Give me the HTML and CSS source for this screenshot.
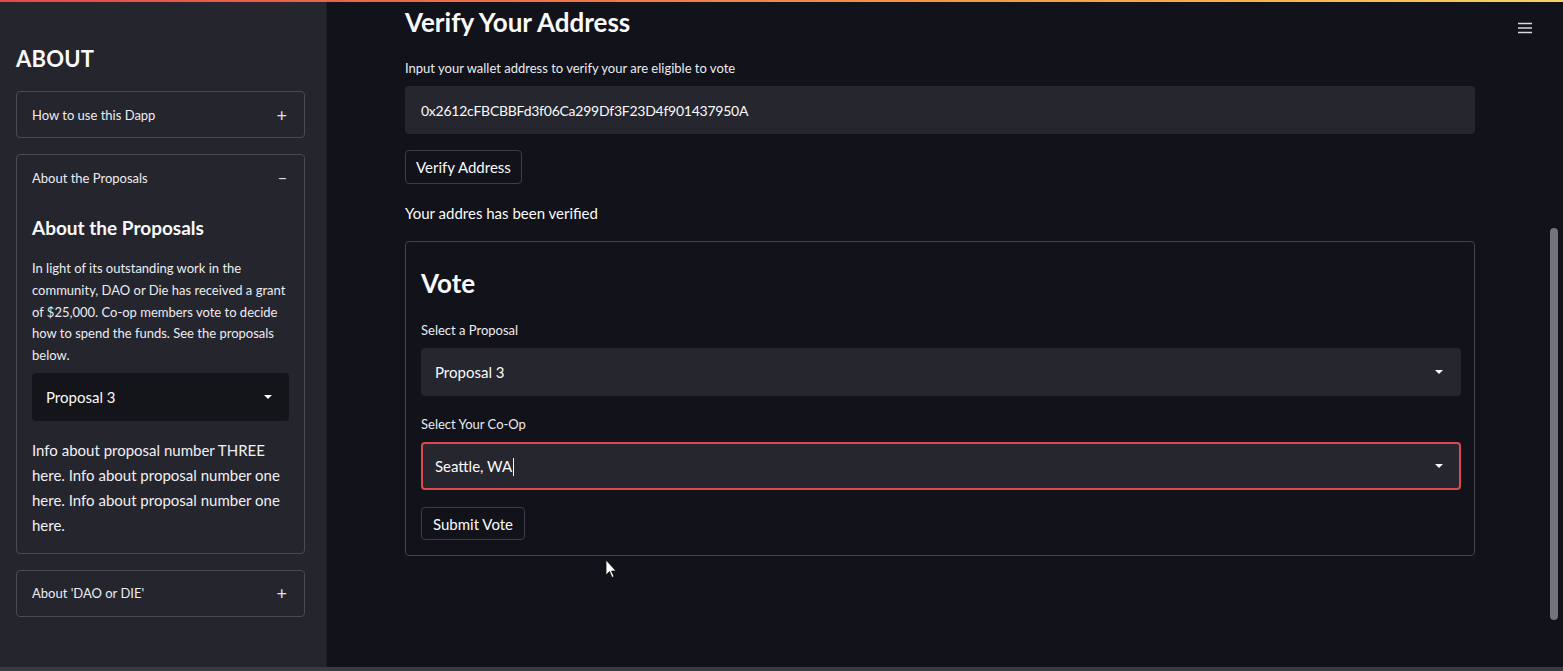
FILE: index.html
```html
<!DOCTYPE html>
<html>
<head>
<meta charset="utf-8">
<link rel="stylesheet" href="styles.css">
</head>
<body>
<div class="topline"></div>
<div class="app">
  <aside class="sidebar">
    <h2 class="side-title">ABOUT</h2>
    <div class="expander">
      <div class="exp-head"><span>How to use this Dapp</span><span class="sign">+</span></div>
    </div>
    <div class="expander">
      <div class="exp-head"><span>About the Proposals</span><span class="sign minus">&minus;</span></div>
      <div class="exp-body">
        <h3 class="exp-title">About the Proposals</h3>
        <p class="small">In light of its outstanding work in the community, DAO or Die has received a grant of $25,000. Co-op members vote to decide how to spend the funds. See the proposals below.</p>
        <div class="side-select"><span>Proposal 3</span><svg class="caret" width="10" height="6" viewBox="0 0 10 6"><path d="M1 1h8L5 5z" fill="#fafafa"/></svg></div>
        <p class="info">Info about proposal number THREE here. Info about proposal number one here. Info about proposal number one here.</p>
      </div>
    </div>
    <div class="expander">
      <div class="exp-head"><span>About 'DAO or DIE'</span><span class="sign">+</span></div>
    </div>
  </aside>
  <main class="main">
    <div class="menu-btn">
      <svg width="14" height="12" viewBox="0 0 14 12"><path d="M0 1.5h14M0 6h14M0 10.5h14" stroke="#d8d8de" stroke-width="1.6"/></svg>
    </div>
    <div class="content">
      <h1 class="page-title">Verify Your Address</h1>
      <label class="label">Input your wallet address to verify your are eligible to vote</label>
      <div class="input">0x2612cFBCBBFd3f06Ca299Df3F23D4f901437950A</div>
      <button class="btn btn-verify">Verify Address</button>
      <p class="status">Your addres has been verified</p>
      <div class="form">
        <h2 class="form-title">Vote</h2>
        <label class="label">Select a Proposal</label>
        <div class="select"><span>Proposal 3</span><svg class="caret" width="10" height="6" viewBox="0 0 10 6"><path d="M1 1h8L5 5z" fill="#fafafa"/></svg></div>
        <label class="label">Select Your Co-Op</label>
        <div class="select focused"><span>Seattle, WA<span class="cursor"></span></span><svg class="caret" width="10" height="6" viewBox="0 0 10 6"><path d="M1 1h8L5 5z" fill="#fafafa"/></svg></div>
        <button class="btn btn-submit">Submit Vote</button>
      </div>
    </div>
    <svg class="pointer" width="12" height="20" viewBox="0 0 12 20"><path d="M1 1v15l3.5-3.5 2.5 6 2-1-2.5-5.5H11z" fill="#fff" stroke="#111" stroke-width="0.8"/></svg>
    <div class="scrollbar"></div>
  </main>
</div>
<div class="bottomline"></div>
</body>
</html>
```
FILE: styles.css
```css
* { box-sizing: border-box; }
html, body { margin: 0; padding: 0; }
body {
  width: 1563px;
  height: 671px;
  overflow: hidden;
  background: #11121a;
  color: #fafafa;
  font-family: "Source Sans Pro", Lato, "Noto Sans", sans-serif;
  display: flex;
  flex-direction: column;
}
.topline {
  height: 2px;
  background: linear-gradient(90deg, #e8494c 0%, #f07a4a 40%, #f7b24a 80%, #f5d266 100%);
  flex: none;
}
.app {
  flex: 1;
  display: flex;
  min-height: 0;
}
.bottomline {
  height: 4px;
  background: #3a3a42;
  flex: none;
}
.sidebar {
  width: 327px;
  flex: none;
  background: #25252e;
  padding: 44px 21px 0 16px;
  border-right: 1px solid #1b1b22;
}
.side-title {
  margin: 0 0 19px;
  font-size: 22px;
  font-weight: 700;
  line-height: 26px;
  letter-spacing: 0.2px;
}
.expander {
  border: 1px solid #4a4a54;
  border-radius: 4px;
  margin-bottom: 16px;
}
.exp-head {
  height: 45px;
  display: flex;
  align-items: center;
  justify-content: space-between;
  padding: 0 17px 0 15px;
  font-size: 13px;
  color: #ececf0;
}
.sign {
  font-size: 18px;
  font-weight: 400;
  color: #e0e0e6;
}
.minus { font-size: 16px; }
.exp-body {
  padding: 15px 15px 15px;
}
.exp-title {
  margin: 0 0 17px;
  font-size: 19px;
  font-weight: 700;
  line-height: 26px;
}
.small {
  margin: 0 0 6px;
  font-size: 13px;
  line-height: 21.8px;
  color: #ececf0;
}
.side-select {
  height: 48px;
  background: #14141b;
  border-radius: 4px;
  display: flex;
  align-items: center;
  justify-content: space-between;
  padding: 0 16px 0 14px;
  font-size: 15px;
  margin-bottom: 17px;
}
.info {
  margin: 0;
  font-size: 15px;
  line-height: 25px;
  color: #f0f0f4;
}
.main {
  flex: 1;
  position: relative;
  padding: 0 88px 0 78px;
  overflow: hidden;
}
.content {
  width: 1070px;
}
.page-title {
  margin: 3px 0 20px;
  font-size: 26px;
  font-weight: 700;
  line-height: 34px;
}
.label {
  display: block;
  font-size: 13px;
  line-height: 18px;
  margin-bottom: 9px;
  color: #ececf0;
}
.input {
  height: 48px;
  background: #26262f;
  border-radius: 4px;
  display: flex;
  align-items: center;
  padding: 0 16px;
  font-size: 14px;
  letter-spacing: -0.25px;
  margin-bottom: 16px;
}
.btn {
  display: block;
  background: #11121a;
  border: 1px solid #3e3e48;
  border-radius: 4px;
  color: #fafafa;
  font-family: inherit;
  font-size: 15px;
  padding: 0 10px;
}
.btn-verify { height: 34px; }
.status {
  margin: 18px 0 17px;
  font-size: 15px;
  line-height: 22px;
}
.form {
  border: 1px solid #45454f;
  border-radius: 4px;
  padding: 24px 13px 15px 15px;
}
.form-title {
  margin: 0 0 21px;
  font-size: 26px;
  font-weight: 700;
  line-height: 34px;
}
.select {
  height: 48px;
  background: #26262f;
  border-radius: 4px;
  display: flex;
  align-items: center;
  justify-content: space-between;
  padding: 0 17px 0 14px;
  font-size: 15px;
  margin-bottom: 19px;
}
.select.focused {
  border: 2px solid #d9494f;
  padding: 0 15px 0 12px;
  margin-bottom: 17px;
}
.cursor {
  display: inline-block;
  width: 1px;
  height: 18px;
  background: #fafafa;
  vertical-align: -4px;
  margin-left: 1px;
}
.btn-submit { height: 33px; padding: 0 11px; }
.menu-btn {
  position: absolute;
  top: 16px;
  right: 31px;
}
.scrollbar {
  position: absolute;
  right: 5px;
  top: 226px;
  width: 8px;
  height: 392px;
  background: #74747c;
  border-radius: 4px;
}
.pointer {
  position: absolute;
  left: 278px;
  top: 557px;
}
```
